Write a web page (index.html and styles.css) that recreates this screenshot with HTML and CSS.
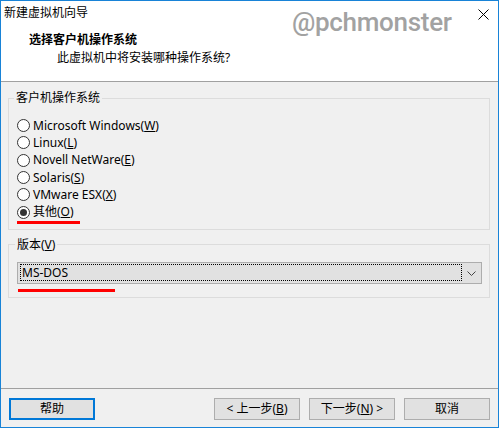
FILE: index.html
```html
<!DOCTYPE html>
<html lang="zh">
<head>
<meta charset="utf-8">
<link rel="stylesheet" href="styles.css">
</head>
<body>
<div class="window">
  <div class="head">
    <div class="title">新建虚拟机向导</div>
    <div class="heading">选择客户机操作系统</div>
    <div class="sub">此虚拟机中将安装哪种操作系统?</div>
    <div class="watermark">@pchmonster</div>
    <svg class="close" width="11" height="11" viewBox="0 0 11 11"><path d="M0.5 0.5 L10.5 10.5 M10.5 0.5 L0.5 10.5" stroke="#000" stroke-width="1" fill="none"/></svg>
  </div>
  <div class="content">
    <fieldset class="group group-os">
      <legend class="legend legend-os">客户机操作系统</legend>
      <div class="radio"><span class="dot"></span><span>Microsoft Windows(<u>W</u>)</span></div>
      <div class="radio"><span class="dot"></span><span>Linux(<u>L</u>)</span></div>
      <div class="radio"><span class="dot"></span><span>Novell NetWare(<u>E</u>)</span></div>
      <div class="radio"><span class="dot"></span><span>Solaris(<u>S</u>)</span></div>
      <div class="radio"><span class="dot"></span><span>VMware ESX(<u>X</u>)</span></div>
      <div class="radio checked"><span class="dot"></span><span>其他(<u>O</u>)</span></div>
      <div class="mark mark-os"></div>
    </fieldset>
    <fieldset class="group group-ver">
      <legend class="legend">版本(<u>V</u>)</legend>
      <div class="select">
        <div class="focus">MS-DOS</div>
        <div class="arrow"><svg width="9" height="5" viewBox="0 0 9 5"><path d="M0.5 0.5 L4.5 4.5 L8.5 0.5" stroke="#444" stroke-width="1" fill="none"/></svg></div>
      </div>
      <div class="mark mark-ver"></div>
    </fieldset>
  </div>
  <div class="footer">
    <div class="btn default">帮助</div>
    <div class="spacer"></div>
    <div class="btn">&lt; 上一步(<u>B</u>)</div>
    <div class="btn">下一步(<u>N</u>) &gt;</div>
    <div class="btn">取消</div>
  </div>
</div>
</body>
</html>
```

FILE: styles.css
```css
html, body {
  margin: 0;
  padding: 0;
  background: #f0f0f0;
}
body {
  font-family: "Noto Sans", "Noto Sans CJK SC", sans-serif;
  font-size: 12px;
  color: #000;
}
.window {
  width: 499px;
  height: 428px;
  box-sizing: border-box;
  border: 1px solid #1883d7;
  background: #f0f0f0;
  display: flex;
  flex-direction: column;
}
.head {
  position: relative;
  height: 80px;
  background: #fff;
  border-bottom: 1px solid #a0a0a0;
  flex: none;
}
.title {
  padding: 4px 0 0 3px;
  line-height: 16px;
  height: 16px;
}
.heading {
  margin-top: 11px;
  padding-left: 28px;
  font-weight: bold;
  line-height: 16px;
}
.sub {
  margin-top: 2px;
  padding-left: 56px;
  line-height: 16px;
}
.watermark {
  position: absolute;
  left: 291px;
  top: 5px;
  font-family: "Roboto", sans-serif;
  font-weight: 500;
  font-size: 26px;
  line-height: 32px;
  color: #a2a2a2;
  letter-spacing: -0.3px;
}
.close {
  position: absolute;
  left: 477px;
  top: 8px;
}
.content {
  flex: 1;
  padding: 0 8px 0 7px;
}
.group {
  margin: 0;
  border: 1px solid #dcdcdc;
  padding: 0 7px 0 8px;
  min-width: 0;
}
.group-os {
  margin-top: 9px;
  padding-top: 12px;
  padding-bottom: 5px;
}
.group-ver {
  margin-top: 8px;
  padding-top: 10px;
  padding-bottom: 5px;
}
.legend {
  padding: 0 2px;
  margin-left: -2px;
  line-height: 14px;
}
.legend-os {
  margin-left: -3px;
}
.radio {
  display: flex;
  align-items: center;
  height: 17.3px;
  line-height: 16px;
}
.dot {
  width: 11px;
  height: 11px;
  border: 1px solid #333;
  border-radius: 50%;
  background: #fff;
  margin-right: 3px;
  flex: none;
  display: flex;
  align-items: center;
  justify-content: center;
}
.checked .dot::after {
  content: "";
  width: 7px;
  height: 7px;
  border-radius: 50%;
  background: #333;
}
.mark {
  background: #f00;
  height: 3px;
}
.mark-os {
  width: 63px;
  margin-top: 0;
}
.mark-ver {
  width: 97px;
  margin-top: 5px;
  margin-left: 1px;
}
.select {
  height: 22px;
  box-sizing: border-box;
  border: 1px solid #adadad;
  background: #e1e1e1;
  display: flex;
  align-items: stretch;
}
.focus {
  flex: 1;
  margin: 1px 0 2px 2px;
  border: 1px dotted #000;
  padding-left: 1px;
  line-height: 15px;
}
.arrow {
  width: 19px;
  flex: none;
  display: flex;
  align-items: center;
  justify-content: center;
  padding-top: 1px;
}
.footer {
  flex: none;
  height: 39px;
  border-top: 1px solid #a0a0a0;
  box-sizing: border-box;
  padding: 9px 8px 0 8px;
  display: flex;
  gap: 9px;
}
.spacer {
  flex: 1;
}
.btn {
  width: 86px;
  height: 22px;
  box-sizing: border-box;
  border: 1px solid #adadad;
  background: #e1e1e1;
  display: flex;
  align-items: center;
  justify-content: center;
  line-height: 16px;
}
.btn.default {
  border: 2px solid #0078d7;
}
```
